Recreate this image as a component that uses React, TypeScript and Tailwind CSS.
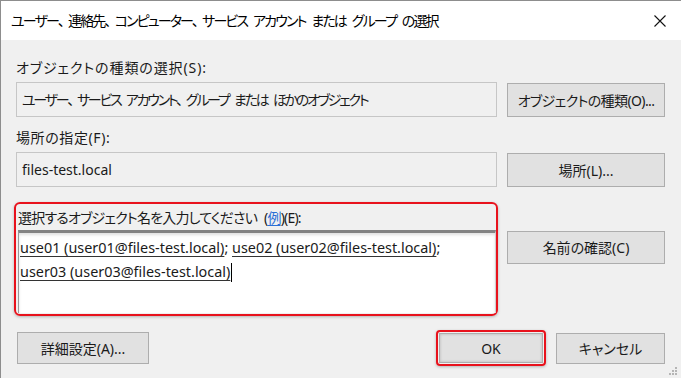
const font = "font-['Noto_Sans','Noto_Sans_CJK_JP',sans-serif]";
const palt = "[font-feature-settings:'palt']";

function Btn({ label, className }: { label: string; className: string }) {
  return (
    <div
      className={`flex items-center justify-center bg-[#e1e1e1] border border-[#adadad] text-[14px] text-[#1a1a1a] ${palt} ${className}`}
    >
      {label}
    </div>
  );
}

// 、 keeps its full-width gap as in the Windows UI font
function Jp({ text }: { text: string }) {
  const parts = text.split("、");
  return (
    <>
      {parts.map((p, i) => (
        <span key={i}>
          {p}
          {i < parts.length - 1 && <span className="pr-[5px]">、</span>}
        </span>
      ))}
    </>
  );
}

function ReadField({ children, className = "" }: { children: React.ReactNode; className?: string }) {
  return (
    <div className={`w-[481px] h-[35px] flex items-center pl-[5px] border border-[#c6c6c6] bg-[#f0f0f0] text-[14px] text-[#1a1a1a] whitespace-pre ${className}`}>
      {children}
    </div>
  );
}

function Picked({ children }: { children: string }) {
  return <span className="underline underline-offset-[3px] decoration-[#333]">{children}</span>;
}

export default function App() {
  return (
    <div className={`relative w-[681px] h-[378px] overflow-hidden flex flex-col bg-[#f0f0f0] border-l border-t border-[#8d8d8d] ${font}`}>
      <div className="h-[39px] bg-white flex items-center justify-between pl-[10px] pr-[15px] shrink-0">
        <span className={`text-[14px] text-black tracking-[-1.85px] [word-spacing:4px] whitespace-pre ${palt}`}>
          <Jp text="ユーザー、連絡先、コンピューター、サービス アカウント または グループ の選択" />
        </span>
        <svg width="12" height="12" viewBox="0 0 12 12">
          <path d="M0.5 0.5 L11.5 11.5 M11.5 0.5 L0.5 11.5" stroke="#111" strokeWidth="1.1" fill="none" />
        </svg>
      </div>

      <div className={`flex flex-col px-[15px] pt-[18px] text-[14px] text-[#1a1a1a] ${palt}`}>
        <div className="h-[20px] leading-[20px] tracking-[0.9px]">オブジェクトの種類の選択(S):</div>
        <div className="flex items-start gap-[10px] mt-[4px]">
          <ReadField className="tracking-[-2.25px] [word-spacing:4px]">
            <Jp text="ユーザー、サービス アカウント、グループ または ほかのオブジェクト" />
          </ReadField>
          <Btn label="オブジェクトの種類(O)..." className="w-[158px] h-[34px] mt-[1px] tracking-[-0.6px]" />
        </div>

        <div className="h-[20px] leading-[20px] mt-[11px] tracking-[0.6px]">場所の指定(F):</div>
        <div className="flex items-start gap-[10px] mt-[4px]">
          <ReadField className="tracking-normal">files-test.local</ReadField>
          <Btn label="場所(L)..." className="w-[158px] h-[34px] mt-[1px]" />
        </div>

        <div className="flex items-start gap-[9px] mt-[15px]">
          <div className="w-[484px] h-[114px] ml-[-2px] border-2 border-[#e8121c] rounded-[6px] flex flex-col pt-[4px] shadow-[0_1px_3px_rgba(0,0,0,0.25)]">
            <div className="h-[20px] leading-[20px] pl-[2px] tracking-[-0.8px] [word-spacing:4px]">
              選択するオブジェクト名を入力してください (
              <span className="text-[#2a6fd6] underline underline-offset-[2px]">例</span>
              )(E):
            </div>
            <div className="mt-[2px] ml-[2px] w-[478px] h-[83px] bg-white border-t-[3px] border-t-[#838383] border-l border-l-[#9a9a9a] border-r border-r-[#d0d0d0] pl-[1px] pt-[3px] leading-[24px] text-[14.4px] text-[#1a1a1a] shadow-[inset_0_2px_3px_rgba(0,0,0,0.12)]">
              <div>
                <Picked>use01 (user01@files-test.local)</Picked>; <Picked>use02 (user02@files-test.local)</Picked>;
              </div>
              <div className="flex items-center">
                <Picked>user03 (user03@files-test.local)</Picked>
                <span className="inline-block w-[1px] h-[19px] bg-black ml-[1px]" />
              </div>
            </div>
          </div>
          <Btn label="名前の確認(C)" className="w-[158px] h-[33px] mt-[29px]" />
        </div>

        <div className="flex items-center mt-[14px]">
          <Btn label="詳細設定(A)..." className="w-[132px] h-[32px] ml-[1px]" />
          <div className="flex-1" />
          <div className="w-[110px] h-[36px] border-2 border-[#e8121c] rounded-[4px] p-[1px] shadow-[0_1px_3px_rgba(0,0,0,0.25)]">
            <Btn label="OK" className="w-full h-full border-[#8a8a8a] shadow-[inset_0_0_3px_rgba(0,0,0,0.2)]" />
          </div>
          <Btn label="キャンセル" className="w-[109px] h-[31px] ml-[10px] mr-[1px]" />
        </div>
      </div>

      <svg className="absolute right-[4px] bottom-[3px]" width="8" height="8" viewBox="0 0 8 8">
        <rect x="6" y="0" width="2" height="2" fill="#b5b5b5" />
        <rect x="3" y="3" width="2" height="2" fill="#b5b5b5" />
        <rect x="6" y="3" width="2" height="2" fill="#b5b5b5" />
        <rect x="0" y="6" width="2" height="2" fill="#b5b5b5" />
        <rect x="3" y="6" width="2" height="2" fill="#b5b5b5" />
        <rect x="6" y="6" width="2" height="2" fill="#b5b5b5" />
      </svg>
    </div>
  );
}
